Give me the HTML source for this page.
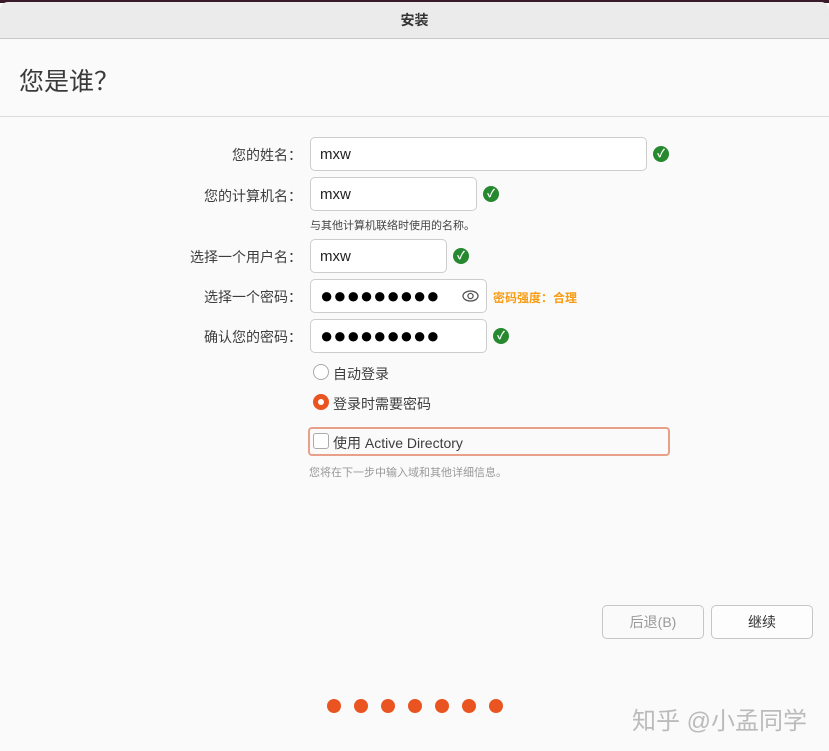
<!DOCTYPE html>
<html><head><meta charset="utf-8"><style>
*{margin:0;padding:0;box-sizing:border-box}
body{width:829px;height:751px;background:#fafafa;position:relative;overflow:hidden;font-family:"Liberation Sans","Noto Sans CJK SC",sans-serif;color:#3d3d3d}
.a{position:absolute}
.top{left:0;top:0;width:829px;height:3px;background:#3a1a2a}
.tb{left:0;top:2px;width:829px;height:37px;background:#ebebeb;border-bottom:1px solid #c8c8c8;border-radius:8px 8px 0 0;text-align:center;line-height:37px;font-size:14px;font-weight:bold;color:#333}
.h{left:19px;top:62px;font-size:25px;color:#3a3a3a}
.hr{left:0;top:116px;width:829px;height:1px;background:#ddd}
.lbl{font-size:14px;text-align:right;width:200px;left:102px}
.in{background:#fff;border:1px solid #cdcdcd;border-radius:5px;height:34px;font-size:15px;padding-left:9px;line-height:34px;color:#222}
.ck{width:16px;height:16px;border-radius:50%;background:#26882f;color:#fff;font-size:11px;text-align:center;line-height:16px;font-weight:bold}
.dots{font-size:22px;color:#000;line-height:32px}
.sm{font-size:11px;color:#444}
.btn{top:605px;height:34px;width:102px;border:1px solid #c6c6c6;border-radius:5px;text-align:center;line-height:32px;font-size:14px;background:#fafafa}
.dot{top:699px;width:14px;height:14px;border-radius:50%;background:#e95420}
</style></head><body>
<div class="a top"></div>
<div class="a tb">安装</div>
<div class="a h">您是谁？</div>
<div class="a hr"></div>

<div class="a lbl" style="top:145px">您的姓名：</div>
<div class="a in" style="left:310px;top:137px;width:337px">mxw</div>
<div class="a ck" style="left:653px;top:146px">✓</div>

<div class="a lbl" style="top:186px">您的计算机名：</div>
<div class="a in" style="left:310px;top:177px;width:167px">mxw</div>
<div class="a ck" style="left:483px;top:186px">✓</div>
<div class="a sm" style="left:310px;top:217px">与其他计算机联络时使用的名称。</div>

<div class="a lbl" style="top:247px">选择一个用户名：</div>
<div class="a in" style="left:310px;top:239px;width:137px">mxw</div>
<div class="a ck" style="left:453px;top:248px">✓</div>

<div class="a lbl" style="top:287px">选择一个密码：</div>
<div class="a in dots" style="left:310px;top:279px;width:177px">●●●●●●●●●</div>
<svg class="a" style="left:462px;top:289px" width="17" height="14" viewBox="0 0 17 14"><ellipse cx="8.5" cy="7" rx="7.5" ry="5" fill="none" stroke="#555" stroke-width="1.3"/><circle cx="8.5" cy="7" r="2.6" fill="none" stroke="#555" stroke-width="1.3"/></svg>
<div class="a" style="left:493px;top:289px;font-size:12px;font-weight:bold;color:#f99b11">密码强度：合理</div>

<div class="a lbl" style="top:327px">确认您的密码：</div>
<div class="a in dots" style="left:310px;top:319px;width:177px">●●●●●●●●●</div>
<div class="a ck" style="left:493px;top:328px">✓</div>

<div class="a" style="left:313px;top:364px;width:16px;height:16px;border-radius:50%;border:1px solid #aaa;background:#fff"></div>
<div class="a" style="left:333px;top:364px;font-size:14px">自动登录</div>
<div class="a" style="left:313px;top:394px;width:16px;height:16px;border-radius:50%;background:#e95420"><div style="margin:5px;width:6px;height:6px;border-radius:50%;background:#fff"></div></div>
<div class="a" style="left:333px;top:394px;font-size:14px">登录时需要密码</div>

<div class="a" style="left:308px;top:427px;width:362px;height:29px;border:2px solid #e8a08a;border-radius:4px"></div>
<div class="a" style="left:313px;top:433px;width:16px;height:16px;border:1px solid #aaa;border-radius:3px;background:#fff"></div>
<div class="a" style="left:333px;top:433px;font-size:14px">使用 Active Directory</div>
<div class="a sm" style="left:309px;top:464px;color:#999">您将在下一步中输入域和其他详细信息。</div>

<div class="a btn" style="left:602px;color:#999">后退(B)</div>
<div class="a btn" style="left:711px;color:#333;background:#fdfdfd">继续</div>

<div class="a dot" style="left:327px"></div>
<div class="a dot" style="left:354px"></div>
<div class="a dot" style="left:381px"></div>
<div class="a dot" style="left:408px"></div>
<div class="a dot" style="left:435px"></div>
<div class="a dot" style="left:462px"></div>
<div class="a dot" style="left:489px"></div>

<div class="a" style="left:632px;top:701px;font-size:24px;color:#bbb;letter-spacing:0px">知乎 @小孟同学</div>
</body></html>
